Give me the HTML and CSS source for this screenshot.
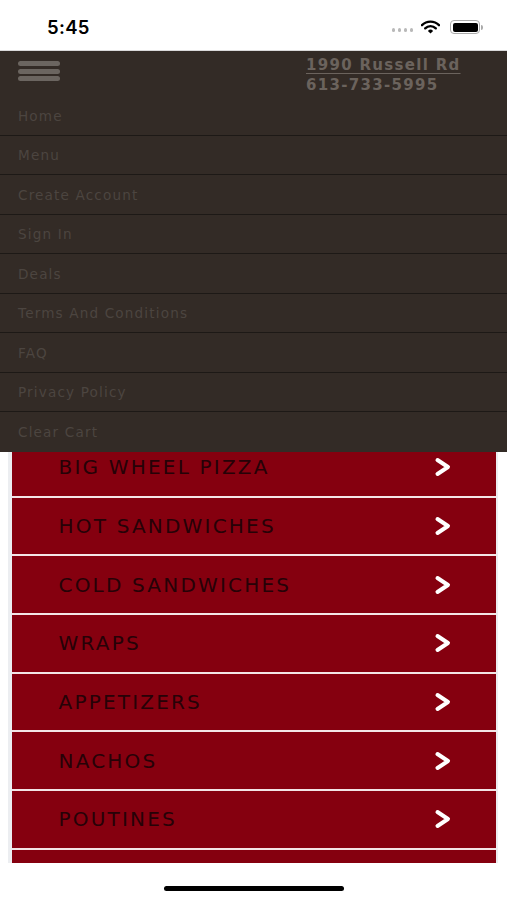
FILE: index.html
```html
<!DOCTYPE html>
<html lang="en">
<head>
<meta charset="utf-8">
<title>Menu</title>
<link rel="stylesheet" href="styles.css">
</head>
<body>
<div class="phone">
  <div class="status">
    <span class="time">5:45</span>
    <div class="status-icons">
      <span class="dots"><i></i><i></i><i></i><i></i></span>
      <svg class="wifi" width="19" height="14" viewBox="0 0 19 14">
        <path d="M1 5.2 A12 12 0 0 1 18 5.2" fill="none" stroke="#000" stroke-width="2.4" stroke-linecap="round"/>
        <path d="M4.2 8.3 A7.5 7.5 0 0 1 14.8 8.3" fill="none" stroke="#000" stroke-width="2.4" stroke-linecap="round"/>
        <path d="M9.5 13.5 L6.9 10.9 A3.7 3.7 0 0 1 12.1 10.9 Z" fill="#000"/>
      </svg>
      <span class="battery"><span class="battery-fill"></span></span><span class="battery-nub"></span>
    </div>
  </div>
  <div class="app">
    <header class="topbar">
      <div class="burger"><i></i><i></i><i></i></div>
      <div class="contact">
        <a class="addr" href="#">1990 Russell Rd</a>
        <span class="phone-no">613-733-5995</span>
      </div>
    </header>
    <main class="content">
      <ul class="cats">
        <li><span>BIG WHEEL PIZZA</span><svg class="chev" viewBox="0 0 18 20" width="18" height="20"><polyline points="3.5,3 14,10 3.5,17" /></svg></li>
        <li><span>HOT SANDWICHES</span><svg class="chev" viewBox="0 0 18 20" width="18" height="20"><polyline points="3.5,3 14,10 3.5,17" /></svg></li>
        <li><span>COLD SANDWICHES</span><svg class="chev" viewBox="0 0 18 20" width="18" height="20"><polyline points="3.5,3 14,10 3.5,17" /></svg></li>
        <li><span>WRAPS</span><svg class="chev" viewBox="0 0 18 20" width="18" height="20"><polyline points="3.5,3 14,10 3.5,17" /></svg></li>
        <li><span>APPETIZERS</span><svg class="chev" viewBox="0 0 18 20" width="18" height="20"><polyline points="3.5,3 14,10 3.5,17" /></svg></li>
        <li><span>NACHOS</span><svg class="chev" viewBox="0 0 18 20" width="18" height="20"><polyline points="3.5,3 14,10 3.5,17" /></svg></li>
        <li><span>POUTINES</span><svg class="chev" viewBox="0 0 18 20" width="18" height="20"><polyline points="3.5,3 14,10 3.5,17" /></svg></li>
        <li class="peek"></li>
      </ul>
    </main>
    <nav class="drawer">
      <a href="#">Home</a>
      <a href="#">Menu</a>
      <a href="#">Create Account</a>
      <a href="#">Sign In</a>
      <a href="#">Deals</a>
      <a href="#">Terms And Conditions</a>
      <a href="#">FAQ</a>
      <a href="#">Privacy Policy</a>
      <a href="#">Clear Cart</a>
    </nav>
  </div>
  <div class="bottom"><span class="home-ind"></span></div>
</div>
</body>
</html>
```
FILE: styles.css
```css
* { box-sizing: border-box; }
html, body { margin: 0; padding: 0; background: #fff; }
body { font-family: "DejaVu Sans", "Noto Sans", sans-serif; }

.phone {
  width: 507px;
  height: 900px;
  display: flex;
  flex-direction: column;
  overflow: hidden;
}

.status {
  height: 51px;
  flex: none;
  display: flex;
  align-items: center;
  justify-content: space-between;
  padding: 4px 24px 0 47px;
  border-bottom: 1px solid #d9d9d9;
}
.time {
  font-family: Inter, "Noto Sans", sans-serif;
  font-weight: 600;
  font-size: 18.5px;
  color: #000;
  letter-spacing: 0.3px;
}
.status-icons { display: flex; align-items: center; }
.dots { display: flex; gap: 2.5px; margin-right: 8px; margin-top: 6px; }
.dots i { width: 3.5px; height: 3.5px; border-radius: 50%; background: #b9b9b9; display: block; }
.wifi { margin-right: 10px; }
.battery {
  width: 30px; height: 14px;
  border: 1.5px solid #aaa;
  border-radius: 4px;
  padding: 1.5px;
  display: block;
}
.battery-fill { display: block; width: 100%; height: 100%; background: #000; border-radius: 2px; }
.battery-nub { width: 2px; height: 5px; background: #aaa; border-radius: 0 2px 2px 0; margin-left: 1px; display: block; }

.app {
  flex: 1;
  position: relative;
  overflow: hidden;
  display: flex;
  flex-direction: column;
}

.topbar {
  height: 45px;
  flex: none;
  background: #332b26;
  display: flex;
  align-items: flex-start;
  justify-content: space-between;
  padding: 0 0 0 18px;
}
.burger { display: flex; flex-direction: column; gap: 2.5px; margin-top: 10px; }
.burger i { display: block; width: 42px; height: 5px; border-radius: 3px; background: #6b6560; }
.contact {
  width: 201px;
  display: flex;
  flex-direction: column;
  font-family: "DejaVu Sans", sans-serif;
  font-weight: bold;
  font-size: 15px;
  letter-spacing: 1.3px;
  color: #6b635d;
  padding-top: 4px;
  line-height: 20px;
}
.addr { color: #6b635d; text-decoration: underline; text-underline-offset: 3px; text-decoration-thickness: 1px; }

.content { flex: 1; padding-top: 343px; }
.cats {
  list-style: none;
  margin: 0 9px 0 8px;
  padding: 0;
  border-left: 4.5px solid #eceef1;
  border-right: 2.5px solid #eceef1;
  background: #f3e4e5;
}
.cats li {
  height: 56.7px;
  margin-bottom: 2px;
  background: #85000f;
  display: flex;
  align-items: center;
  justify-content: space-between;
  padding: 0 44px 0 46.5px;
  font-family: "DejaVu Sans", sans-serif;
  font-size: 20px;
  color: #260207;
  letter-spacing: 2.2px;
}
.chev { fill: none; stroke: #fff; stroke-width: 4; stroke-linecap: round; stroke-linejoin: round; }

.drawer {
  position: absolute;
  left: 0; right: 0;
  top: 45px;
  display: flex;
  flex-direction: column;
  background: #332b26;
}
.drawer a {
  height: 39.5px;
  display: flex;
  align-items: center;
  padding: 1px 18px 0;
  font-family: "DejaVu Sans", sans-serif;
  font-size: 13.6px;
  letter-spacing: 1.15px;
  color: #4c4540;
  text-decoration: none;
  border-bottom: 1.5px solid #1d1916;
}
.drawer a:last-child { border-bottom: none; }

.bottom {
  height: 37px;
  flex: none;
  background: #fff;
  display: flex;
  justify-content: center;
  padding-top: 23px;
}
.home-ind { width: 180px; height: 5px; border-radius: 3px; background: #000; display: block; }
```
